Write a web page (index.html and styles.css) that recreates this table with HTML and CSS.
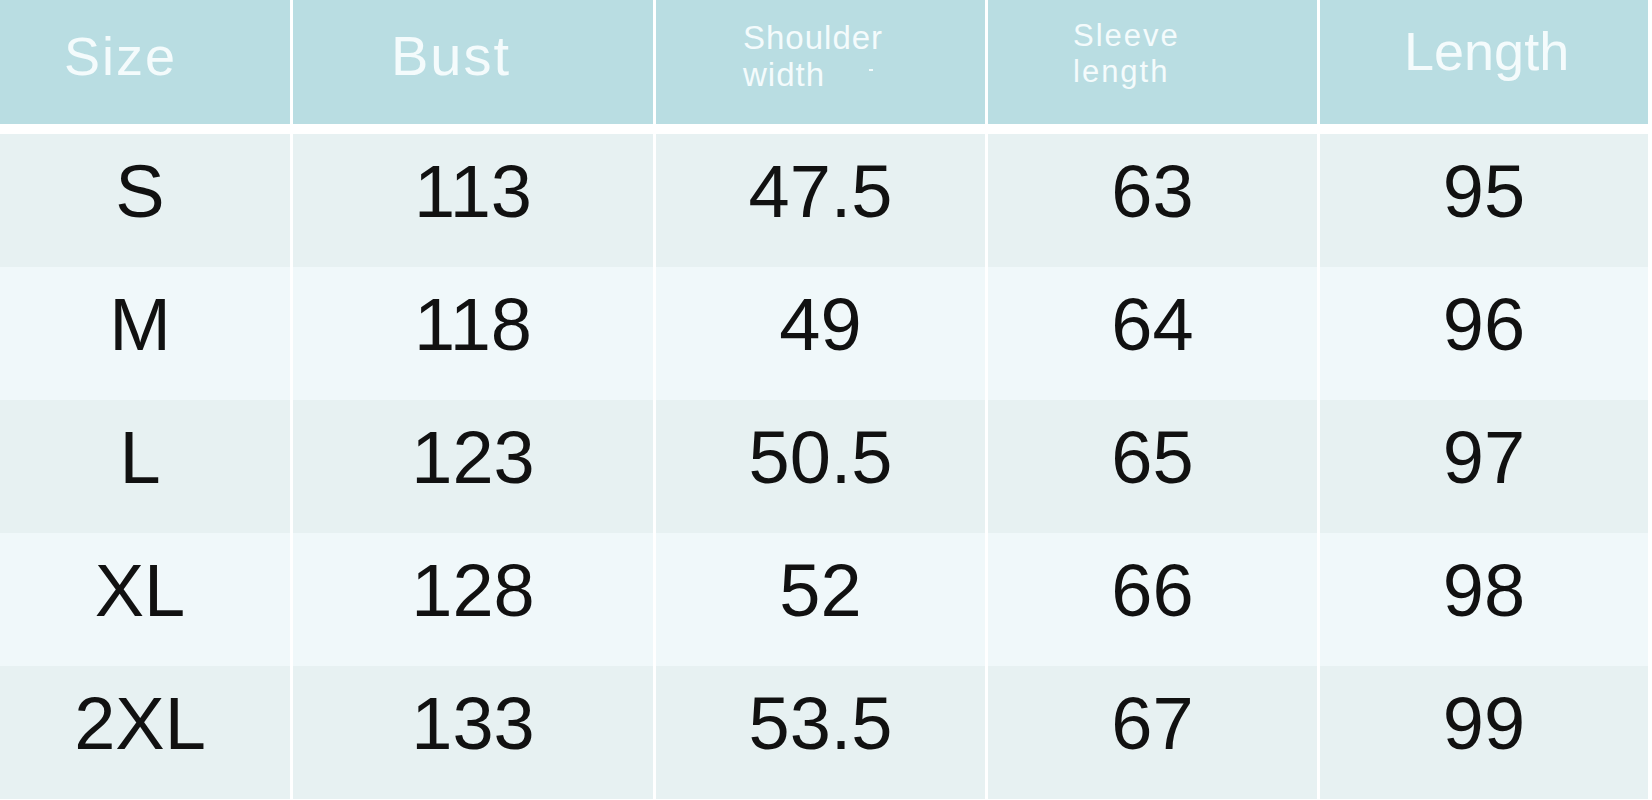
FILE: index.html
```html
<!DOCTYPE html>
<html>
<head>
<meta charset="utf-8">
<link rel="stylesheet" href="styles.css">
</head>
<body>
<div class="table">
  <div class="row head">
    <div class="cell h-size">Size</div>
    <div class="cell h-bust">Bust</div>
    <div class="cell h-shoulder"><span class="two">Shoulder<br>width<span class="dash"></span></span></div>
    <div class="cell h-sleeve"><span class="two">Sleeve<br>length</span></div>
    <div class="cell h-length">Length</div>
  </div>
  <div class="row body odd">
    <div class="cell">S</div><div class="cell">113</div><div class="cell">47.5</div><div class="cell">63</div><div class="cell">95</div>
  </div>
  <div class="row body even">
    <div class="cell">M</div><div class="cell">118</div><div class="cell">49</div><div class="cell">64</div><div class="cell">96</div>
  </div>
  <div class="row body odd">
    <div class="cell">L</div><div class="cell">123</div><div class="cell">50.5</div><div class="cell">65</div><div class="cell">97</div>
  </div>
  <div class="row body even">
    <div class="cell">XL</div><div class="cell">128</div><div class="cell">52</div><div class="cell">66</div><div class="cell">98</div>
  </div>
  <div class="row body odd">
    <div class="cell">2XL</div><div class="cell">133</div><div class="cell">53.5</div><div class="cell">67</div><div class="cell">99</div>
  </div>
</div>
</body>
</html>
```
FILE: styles.css
```css
html, body {
  margin: 0;
  padding: 0;
  background: #ffffff;
  overflow: hidden;
}
body {
  font-family: "Liberation Sans", Arial, sans-serif;
}
.table {
  width: 1648px;
  display: flex;
  flex-direction: column;
}
.row {
  display: grid;
  grid-template-columns: 290px 360px 329px 329px 328px;
  column-gap: 3px;
}
.head {
  height: 124px;
  margin-bottom: 10px;
}
.head .cell {
  background: #b9dde2;
  color: #f4fbfc;
  line-height: 1;
  display: flex;
  align-items: flex-start;
  justify-content: flex-start;
}
.h-size {
  font-size: 54px;
  letter-spacing: 2px;
  padding: 29px 0 0 64px;
}
.h-bust {
  font-size: 56px;
  letter-spacing: 2px;
  padding: 28px 0 0 98px;
}
.h-shoulder {
  font-size: 33px;
  letter-spacing: 1px;
  padding: 19px 0 0 87px;
}
.h-shoulder .two {
  line-height: 37px;
}
.h-sleeve {
  font-size: 31px;
  letter-spacing: 2px;
  padding: 18px 0 0 85px;
}
.h-sleeve .two {
  line-height: 36px;
}
.h-length {
  font-size: 54px;
  padding: 24px 0 0 84px;
}
.two {
  display: block;
}
.dash {
  display: inline-block;
  width: 4px;
  height: 2px;
  background: #f4fbfc;
  margin-left: 44px;
  vertical-align: 15px;
}
.body {
  height: 133px;
}
.body .cell {
  font-size: 74px;
  line-height: 1;
  color: #111111;
  display: flex;
  justify-content: center;
  align-items: flex-start;
  padding-top: 21px;
}
.body .cell:first-child {
  padding-right: 10px;
}
.odd .cell {
  background: #e7f1f2;
}
.even .cell {
  background: #f0f8fa;
}
```
